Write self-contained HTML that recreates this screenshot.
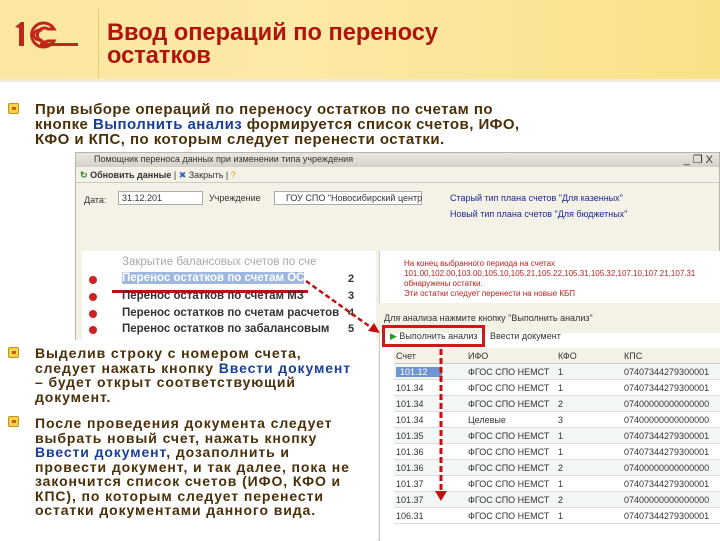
<!DOCTYPE html>
<html><head><meta charset="utf-8"><style>
*{margin:0;padding:0;box-sizing:border-box}
body{width:720px;height:540px;overflow:hidden;background:#fff;font-family:"Liberation Sans",sans-serif;position:relative}
.hdr{position:absolute;left:0;top:0;width:720px;height:82px;background:linear-gradient(90deg,#fbe7a0 0%,#fde9a6 40%,#fbe08a 100%);border-bottom:3px solid #f1ead8}
.vl{position:absolute;left:98px;top:8px;width:1px;height:70px;background:#e8c870}
.title{position:absolute;left:107px;top:22px;color:#b0140c;font-weight:bold;font-size:23.6px;line-height:23px}
.txt{position:absolute;color:#4a3008;font-weight:bold;font-size:15px;line-height:15px}
.blue{color:#1a3f9a}
.bul{position:absolute;width:11px;height:11px;background:#f5d34a;border:1px solid #c49020;border-radius:2px}
.bul:after{content:"";position:absolute;left:3px;top:3px;width:4px;height:3px;background:#d06010}
.win{position:absolute;left:75px;top:152px;width:645px;height:388px;background:#f4f1e7;border:1px solid #b9b6a8}
.s{position:absolute;font-size:10px;color:#333;white-space:nowrap}
.row{position:absolute;left:0;width:100%;height:16px;border-bottom:1px solid #dcdcdc;font-size:9px;color:#333}
.row span{position:absolute;top:3px}
</style></head><body>
<div class="hdr"></div>
<svg style="position:absolute;left:12px;top:19px" width="70" height="30" viewBox="0 0 70 30">
<path d="M3 8 L9 3 L12 3 L12 27 L7 27 L7 9 Z" fill="#c0261a"/>
<path d="M42 10 A12 12 0 1 0 42 22 L36 22 A7 7 0 1 1 36 10 Z" fill="none" stroke="#c0261a" stroke-width="3"/>
<path d="M30 12 A5 5 0 1 0 30 20" fill="none" stroke="#c0261a" stroke-width="2.5"/>
<rect x="28" y="24" width="38" height="3" fill="#c0261a"/>
</svg>
<div class="vl"></div>
<div class="title">Ввод операций по переносу<br>остатков</div>
<div class="bul" style="left:8px;top:103px"></div>
<div class="txt" style="left:35px;top:102px;letter-spacing:0.45px">При выборе операций по переносу остатков по счетам по<br>кнопке <span class="blue">Выполнить анализ</span> формируется список счетов, ИФО,<br>КФО и КПС, по которым следует перенести остатки.</div>

<div class="win">
 <div style="position:absolute;left:0;top:0;width:100%;height:14px;background:linear-gradient(#e8e6df,#d4d2c8)"></div>
 <div class="s" style="left:18px;top:1px;font-size:9px">Помощник переноса данных при изменении типа учреждения</div>
 <div class="s" style="right:6px;top:0px;font-size:11px">_ ❐ X</div>
 <div style="position:absolute;left:0;top:14px;width:100%;height:16px;border-bottom:1px solid #ccc"></div>
 <div class="s" style="left:4px;top:17px;font-size:9px"><b style="color:#2a8a2a">↻</b> <b>Обновить данные</b> | <span style="color:#36c">✖</span> Закрыть | <span style="color:#d90">?</span></div>
 <div class="s" style="left:8px;top:42px;font-size:9px">Дата:</div>
 <div style="position:absolute;left:42px;top:38px;width:85px;height:14px;background:#fff;border:1px solid #aaa"></div>
 <div class="s" style="left:46px;top:40px;font-size:9px">31.12.201</div>
 <div class="s" style="left:133px;top:40px;font-size:9px">Учреждение</div>
 <div style="position:absolute;left:198px;top:38px;width:148px;height:14px;background:#fff;border:1px solid #aaa"></div>
 <div class="s" style="left:210px;top:40px;font-size:9px">ГОУ СПО "Новосибирский центр</div>
 <div class="s" style="left:374px;top:40px;font-size:9px;color:#1a2a9a">Старый тип плана счетов "Для казенных"</div>
 <div class="s" style="left:374px;top:56px;font-size:9px;color:#1a2a9a">Новый тип плана счетов "Для бюджетных"</div>
 <div style="position:absolute;left:6px;top:98px;width:294px;height:95px;background:#fff"></div>
 <div class="s" style="left:46px;top:103px;font-size:11.5px;color:#aaa">Закрытие балансовых счетов по сче</div>
 <div class="s" style="left:46px;top:119px;font-size:11.5px;font-weight:bold;background:#9fb8e0;color:#fff">Перенос остатков по счетам ОС</div>
 <div style="position:absolute;left:36px;top:137px;width:196px;height:3px;background:#c01010"></div>
 <div class="s" style="left:46px;top:137px;font-size:11.5px;font-weight:bold">Перенос остатков по счетам МЗ</div>
 <div class="s" style="left:46px;top:154px;font-size:11.5px;font-weight:bold">Перенос остатков по счетам расчетов</div>
 <div class="s" style="left:46px;top:170px;font-size:11.5px;font-weight:bold">Перенос остатков по забалансовым</div>
 <div class="s" style="left:272px;top:120px;font-size:11px;font-weight:bold">2</div>
 <div class="s" style="left:272px;top:137px;font-size:11px;font-weight:bold">3</div>
 <div class="s" style="left:272px;top:154px;font-size:11px;font-weight:bold">4</div>
 <div class="s" style="left:272px;top:170px;font-size:11px;font-weight:bold">5</div>
 <div style="position:absolute;left:13px;top:123px;width:8px;height:8px;border-radius:50%;background:#d02020"></div>
 <div style="position:absolute;left:13px;top:140px;width:8px;height:8px;border-radius:50%;background:#d02020"></div>
 <div style="position:absolute;left:13px;top:157px;width:8px;height:8px;border-radius:50%;background:#d02020"></div>
 <div style="position:absolute;left:13px;top:173px;width:8px;height:8px;border-radius:50%;background:#d02020"></div>
 <div style="position:absolute;left:303px;top:98px;width:342px;height:290px;background:#fff;border-left:1px solid #ccc"></div>
 <div class="s" style="left:328px;top:106px;font-size:8px;line-height:10px;color:#c02020">На конец выбранного периода на счетах<br>101.00,102.00,103.00,105.10,105.21,105.22,105.31,105.32,107.10,107.21,107.31<br>обнаружены остатки.<br>Эти остатки следует перенести на новые КБП</div>
 <div style="position:absolute;left:303px;top:150px;width:342px;height:30px;background:#f4f1e7"></div>
 <div class="s" style="left:308px;top:160px;font-size:9px">Для анализа нажмите кнопку "Выполнить анализ"</div>
 <div style="position:absolute;left:306px;top:172px;width:103px;height:22px;border:3px solid #d01818"></div>
 <div class="s" style="left:314px;top:178px;font-size:9px"><span style="color:#2a9a2a">▶</span> Выполнить анализ</div>
 <div class="s" style="left:414px;top:178px;font-size:9px">Ввести документ</div>
 <div style="position:absolute;left:318px;top:195px;width:327px;height:16px;background:#f4f1e7;border-bottom:1px solid #ccc"></div>
 <div class="s" style="left:320px;top:198px;font-size:9px">Счет</div>
 <div class="s" style="left:392px;top:198px;font-size:9px">ИФО</div>
 <div class="s" style="left:482px;top:198px;font-size:9px">КФО</div>
 <div class="s" style="left:548px;top:198px;font-size:9px">КПС</div>
 <div id="tb" style="position:absolute;left:318px;top:211px;width:327px;height:165px"></div>
 <svg style="position:absolute;left:0;top:0" width="645" height="388">
  <path d="M230 128 L300 178" stroke="#c01010" stroke-width="2.5" stroke-dasharray="5,3"/>
  <path d="M292 178 L304 180 L298 170 Z" fill="#c01010"/>
  <path d="M365 196 L365 340" stroke="#c01010" stroke-width="3" stroke-dasharray="6,3"/>
  <path d="M359 338 L371 338 L365 348 Z" fill="#c01010"/>
 </svg>
</div>
<script>
var d=[["101.12","ФГОС СПО НЕМСТ","1","07407344279300001"],["101.34","ФГОС СПО НЕМСТ","1","07407344279300001"],["101.34","ФГОС СПО НЕМСТ","2","07400000000000000"],["101.34","Целевые","3","07400000000000000"],["101.35","ФГОС СПО НЕМСТ","1","07407344279300001"],["101.36","ФГОС СПО НЕМСТ","1","07407344279300001"],["101.36","ФГОС СПО НЕМСТ","2","07400000000000000"],["101.37","ФГОС СПО НЕМСТ","1","07407344279300001"],["101.37","ФГОС СПО НЕМСТ","2","07400000000000000"],["106.31","ФГОС СПО НЕМСТ","1","07407344279300001"]];
var h="";d.forEach(function(r,i){h+='<div class="row" style="top:'+(i*16)+'px;background:'+(i%2?'#fff':'#f2f6f4')+'"><span style="left:2px;'+(i==0?'background:#6f95d0;color:#fff;padding:0 14px 0 4px':'')+'">'+r[0]+'</span><span style="left:74px">'+r[1]+'</span><span style="left:164px">'+r[2]+'</span><span style="left:230px">'+r[3]+'</span></div>'});
document.getElementById("tb").innerHTML=h;
</script>
<div style="position:absolute;left:0;top:340px;width:378px;height:200px;background:#fff"></div>
<div class="bul" style="left:8px;top:347px"></div>
<div class="txt" style="left:35px;top:346px;font-size:14px;line-height:14.5px;letter-spacing:0.9px">Выделив строку с номером счета,<br>следует нажать кнопку <span class="blue">Ввести документ</span><br>– будет открыт соответствующий<br>документ.</div>
<div class="bul" style="left:8px;top:416px"></div>
<div class="txt" style="left:35px;top:416px;font-size:14px;line-height:14.5px;letter-spacing:0.9px">После проведения документа следует<br>выбрать новый счет, нажать кнопку<br><span class="blue">Ввести документ</span>, дозаполнить и<br>провести документ, и так далее, пока не<br>закончится список счетов (ИФО, КФО и<br>КПС), по которым следует перенести<br>остатки документами данного вида.</div>
</body></html>
